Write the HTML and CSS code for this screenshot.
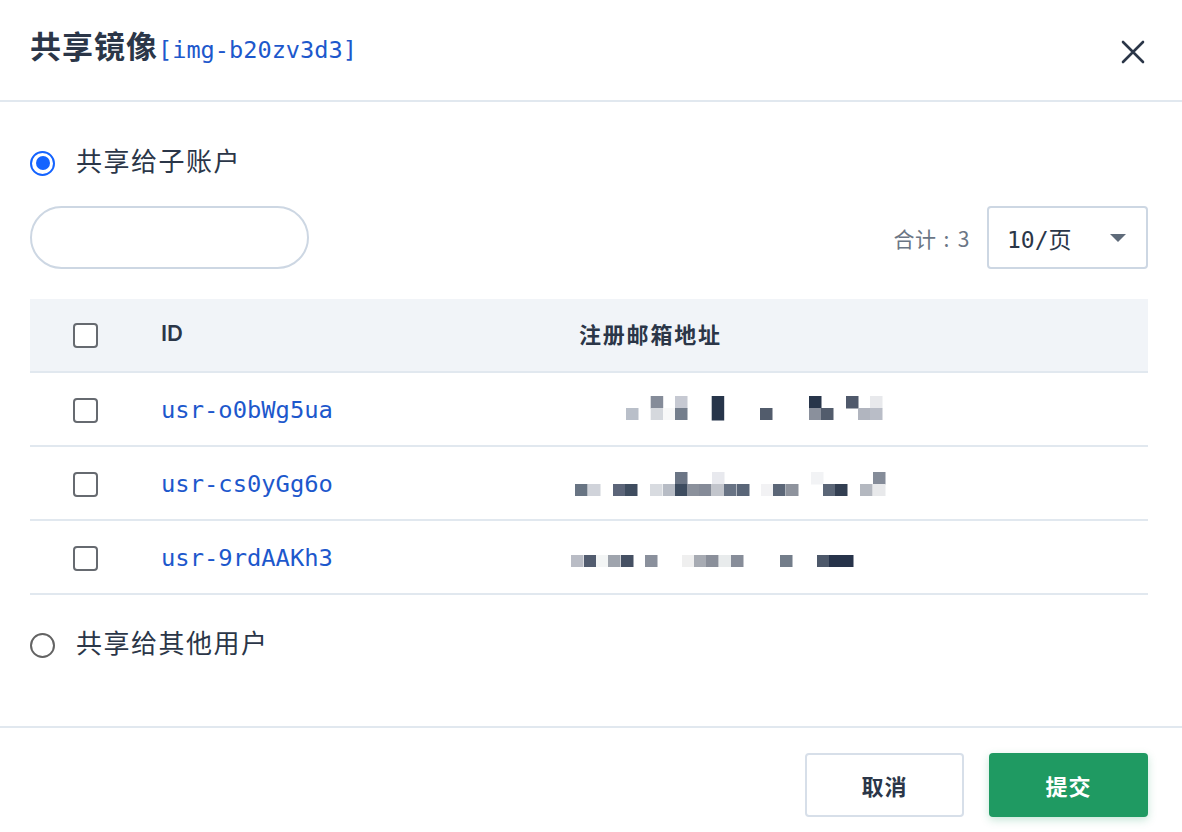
FILE: index.html
```html
<!DOCTYPE html>
<html lang="zh-CN">
<head>
<meta charset="utf-8">
<title>共享镜像</title>
<link rel="stylesheet" href="styles.css">
</head>
<body>
<div class="dialog">
  <header class="header">
    <h1 class="title">共享镜像<span class="title-id">[img-b20zv3d3]</span></h1>
    <button class="close" aria-label="关闭">
      <svg width="26" height="26" viewBox="0 0 26 26"><path d="M3 3 L23 23 M23 3 L3 23" stroke="#2b3648" stroke-width="2.6" stroke-linecap="round"/></svg>
    </button>
  </header>

  <main class="body">
    <label class="radio-row first">
      <span class="radio checked"></span>
      <span class="radio-label">共享给子账户</span>
    </label>

    <div class="toolbar">
      <input class="search" type="text">
      <div class="pager">
        <span class="total">合计<span class="colon">:</span>3</span>
        <div class="select">
          <span class="select-text"><span class="mono">10/</span>页</span>
          <span class="caret"></span>
        </div>
      </div>
    </div>

    <div class="table">
      <div class="tr thead">
        <div class="td check"><span class="checkbox"></span></div>
        <div class="td th-id">ID</div>
        <div class="td th-email">注册邮箱地址</div>
      </div>
      <div class="tr">
        <div class="td check"><span class="checkbox"></span></div>
        <div class="td link">usr-o0bWg5ua</div>
        <div class="td email">
          <svg class="mosaic" width="320" height="74" viewBox="0 0 320 74">
            <rect x="79.7" y="23" width="12.5" height="12.5" fill="#858c99"/>
            <rect x="104" y="23" width="12.5" height="12.5" fill="#c6c9d2"/>
            <rect x="140.7" y="23" width="12.5" height="24.5" fill="#27354a"/>
            <rect x="238" y="23" width="12.5" height="12.5" fill="#27354a"/>
            <rect x="275" y="23" width="12.5" height="12.5" fill="#4f596b"/>
            <rect x="299" y="23" width="12.5" height="12.5" fill="#e8e9ec"/>
            <rect x="55" y="35" width="12.5" height="12" fill="#b9bfc9"/>
            <rect x="79.7" y="35" width="12.5" height="12" fill="#d5d8dd"/>
            <rect x="92" y="35" width="12.5" height="12" fill="#f8f8f8"/>
            <rect x="104" y="35" width="12.5" height="12" fill="#747e8c"/>
            <rect x="189" y="35" width="12.5" height="12" fill="#525c6c"/>
            <rect x="238" y="35" width="12.5" height="12" fill="#8a909c"/>
            <rect x="250" y="35" width="12.5" height="12" fill="#525c6c"/>
            <rect x="287" y="35" width="12.5" height="12" fill="#b1b5bf"/>
            <rect x="299" y="35" width="12.5" height="12" fill="#b9bdc7"/>
          </svg>
        </div>
      </div>
      <div class="tr">
        <div class="td check"><span class="checkbox"></span></div>
        <div class="td link">usr-cs0yGg6o</div>
        <div class="td email">
          <svg class="mosaic" width="320" height="74" viewBox="0 0 320 74">
            <rect x="104" y="25" width="12.5" height="12.5" fill="#6b7585"/>
            <rect x="141" y="25" width="12.5" height="12.5" fill="#e8e9ee"/>
            <rect x="240" y="25" width="12.5" height="12.5" fill="#f2f3f5"/>
            <rect x="302" y="25" width="12.5" height="12.5" fill="#858c99"/>
            <rect x="4" y="37" width="12.5" height="12" fill="#687483"/>
            <rect x="17" y="37" width="12.5" height="12" fill="#d0d3da"/>
            <rect x="42" y="37" width="12.5" height="12" fill="#5c6579"/>
            <rect x="54" y="37" width="12.5" height="12" fill="#3f4d60"/>
            <rect x="79" y="37" width="12.5" height="12" fill="#d8dbe0"/>
            <rect x="92" y="37" width="12.5" height="12" fill="#b7bcc5"/>
            <rect x="104" y="37" width="12.5" height="12" fill="#3d4c5f"/>
            <rect x="116" y="37" width="12.5" height="12" fill="#8b919c"/>
            <rect x="128" y="37" width="12.5" height="12" fill="#858b98"/>
            <rect x="141" y="37" width="12.5" height="12" fill="#c2c5cc"/>
            <rect x="153" y="37" width="12.5" height="12" fill="#687384"/>
            <rect x="166" y="37" width="12.5" height="12" fill="#5a6678"/>
            <rect x="190" y="37" width="12.5" height="12" fill="#f2f2f4"/>
            <rect x="202" y="37" width="12.5" height="12" fill="#5b6677"/>
            <rect x="215" y="37" width="12.5" height="12" fill="#8e939d"/>
            <rect x="252" y="37" width="12.5" height="12" fill="#5b6677"/>
            <rect x="264" y="37" width="12.5" height="12" fill="#333f52"/>
            <rect x="289" y="37" width="12.5" height="12" fill="#b4b8c0"/>
            <rect x="302" y="37" width="12.5" height="12" fill="#e8e9eb"/>
          </svg>
        </div>
      </div>
      <div class="tr">
        <div class="td check"><span class="checkbox"></span></div>
        <div class="td link">usr-9rdAAKh3</div>
        <div class="td email">
          <svg class="mosaic" width="320" height="74" viewBox="0 0 320 74">
            <rect x="0" y="34" width="12.5" height="12" fill="#b9bcc5"/>
            <rect x="13" y="34" width="12.5" height="12" fill="#525c6f"/>
            <rect x="25" y="34" width="12.5" height="12" fill="#f3f5f5"/>
            <rect x="37" y="34" width="12.5" height="12" fill="#9fa4ad"/>
            <rect x="50" y="34" width="12.5" height="12" fill="#455063"/>
            <rect x="74" y="34" width="12.5" height="12" fill="#8a909c"/>
            <rect x="111" y="34" width="12.5" height="12" fill="#efefef"/>
            <rect x="123" y="34" width="12.5" height="12" fill="#a7abb3"/>
            <rect x="135" y="34" width="12.5" height="12" fill="#8a8f9a"/>
            <rect x="148" y="34" width="12.5" height="12" fill="#e8ebec"/>
            <rect x="160" y="34" width="12.5" height="12" fill="#878d99"/>
            <rect x="209" y="34" width="12.5" height="12" fill="#737d8a"/>
            <rect x="246" y="34" width="12.5" height="12" fill="#4d586a"/>
            <rect x="258" y="34" width="24.5" height="12" fill="#27334a"/>
          </svg>
        </div>
      </div>
    </div>

    <label class="radio-row second">
      <span class="radio"></span>
      <span class="radio-label">共享给其他用户</span>
    </label>
  </main>

  <footer class="footer">
    <button class="btn btn-cancel">取消</button>
    <button class="btn btn-submit">提交</button>
  </footer>
</div>
</body>
</html>
```

FILE: styles.css
```css
* { box-sizing: border-box; }

html, body {
  margin: 0;
  padding: 0;
  background: #ffffff;
}

body {
  font-family: "Noto Sans CJK SC", "Noto Sans", sans-serif;
  color: #2b3648;
  width: 1182px;
  height: 832px;
  overflow: hidden;
}

.dialog {
  display: flex;
  flex-direction: column;
  height: 832px;
}

.header {
  height: 102px;
  display: flex;
  align-items: center;
  justify-content: space-between;
  padding: 0 36px 0 30px;
  border-bottom: 2px solid #e1e8ef;
}

.title {
  margin: 0;
  font-size: 31px;
  font-weight: 700;
  letter-spacing: 1px;
  line-height: 1;
  color: #2b3648;
  display: flex;
  align-items: baseline;
  margin-top: -8px;
}

.title-id {
  font-family: "DejaVu Sans Mono", "Liberation Mono", monospace;
  font-weight: 400;
  font-size: 23.6px;
  letter-spacing: 0;
  color: #1d58cc;
}

.close {
  border: 0;
  background: transparent;
  padding: 0;
  width: 26px;
  height: 26px;
  display: flex;
  margin-top: 4px;
}

.body {
  padding: 0 34px 0 30px;
  display: flex;
  flex-direction: column;
}

.radio-row {
  height: 40px;
  display: flex;
  align-items: center;
  gap: 21px;
}

.radio-row.first { margin-top: 39px; }
.radio-row.second { margin-top: 28px; }

.radio {
  width: 25px;
  height: 25px;
  border-radius: 50%;
  border: 2px solid #636363;
  background: #fff;
  display: flex;
  align-items: center;
  justify-content: center;
  margin-top: 4px;
}

.radio.checked {
  border: 2.5px solid #1463ff;
}

.radio.checked::after {
  content: "";
  width: 14px;
  height: 14px;
  border-radius: 50%;
  background: #1463ff;
}

.radio-label {
  font-size: 26px;
  letter-spacing: 1.5px;
  color: #2b3648;
  line-height: 1;
  margin-top: -2px;
}

.toolbar {
  margin-top: 25px;
  display: flex;
  justify-content: space-between;
  align-items: center;
}

.search {
  width: 279px;
  height: 63px;
  border: 2px solid #cdd7e3;
  border-radius: 32px;
  background: #fff;
  outline: none;
}

.pager {
  display: flex;
  align-items: center;
  gap: 17px;
}

.total {
  font-size: 21px;
  color: #6b7685;
  letter-spacing: 0.5px;
  display: flex;
  align-items: center;
}

.colon {
  margin: 0 8px 0 7px;
}

.select {
  width: 161px;
  height: 63px;
  border: 2px solid #cdd7e3;
  border-radius: 4px;
  display: flex;
  align-items: center;
  justify-content: space-between;
  padding: 0 20px 0 18px;
}

.select-text {
  font-size: 23px;
  color: #2b3648;
}

.mono {
  font-family: "DejaVu Sans Mono", "Liberation Mono", monospace;
}

.caret {
  width: 0;
  height: 0;
  border-left: 8px solid transparent;
  border-right: 8px solid transparent;
  border-top: 8px solid #5f6b7a;
}

.table {
  margin-top: 30px;
  display: flex;
  flex-direction: column;
}

.tr {
  display: grid;
  grid-template-columns: 131px 418px 1fr;
  height: 74px;
  border-bottom: 2px solid #e1e8ef;
  align-items: center;
}

.thead {
  background: #f1f4f8;
  height: 74px;
  font-weight: 700;
}

.th-id {
  font-family: "Inter", "Noto Sans", sans-serif;
  font-size: 22px;
  font-weight: 600;
  padding-bottom: 4px;
}

.th-email {
  font-size: 22px;
  letter-spacing: 1.8px;
  padding-bottom: 4px;
}

.td {
  display: flex;
  align-items: center;
  height: 100%;
}

.check {
  padding-left: 43px;
}

.checkbox {
  width: 25px;
  height: 25px;
  border: 2px solid #666a70;
  border-radius: 4px;
  background: #fff;
}

.link {
  font-family: "DejaVu Sans Mono", "Liberation Mono", monospace;
  font-size: 23.8px;
  color: #1d58cc;
}

.email {
  overflow: visible;
}

.mosaic {
  display: block;
  margin-left: -8px;
}

.footer {
  margin-top: 63px;
  border-top: 2px solid #e1e8ef;
  display: flex;
  justify-content: flex-end;
  gap: 25px;
  padding: 25px 34px 0 0;
}

.btn {
  width: 159px;
  height: 64px;
  border-radius: 4px;
  font-family: "Noto Sans CJK SC", "Noto Sans", sans-serif;
  font-size: 22px;
  font-weight: 700;
  letter-spacing: 1px;
  cursor: pointer;
}

.btn-cancel {
  background: #fff;
  border: 2px solid #d7dfe9;
  color: #2b3648;
}

.btn-submit {
  background: #1f9a62;
  border: 0;
  color: #fff;
  box-shadow: 0 3px 8px rgba(31, 154, 98, 0.25);
}
```
